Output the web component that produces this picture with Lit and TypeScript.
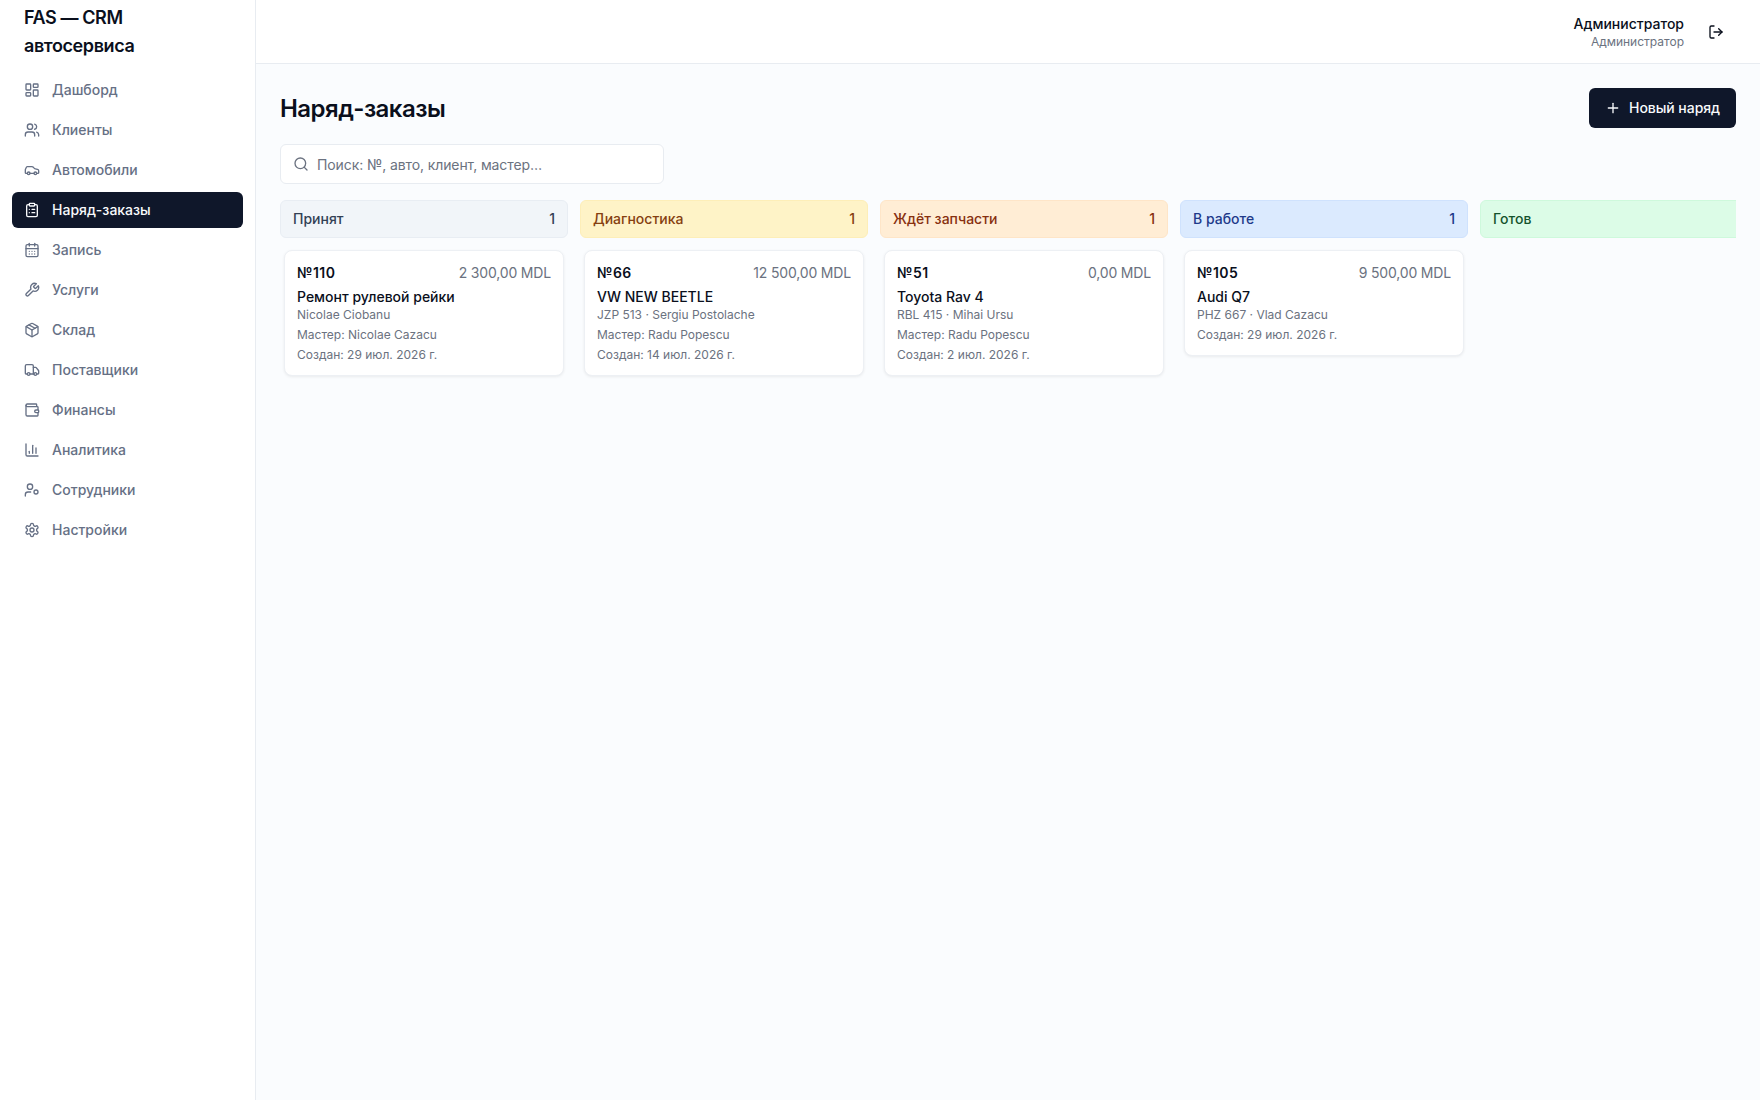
import { LitElement, css, html, svg } from "lit";
import { customElement } from "lit/decorators.js";

interface NavItem {
    label: string,
    icon: ReturnType<typeof svg>,
    active?: boolean
}

interface Order {
    no: string,
    sum: string,
    title: string,
    sub: string,
    master?: string,
    created: string
}

interface Column {
    name: string,
    tone: string,
    count?: number,
    orders: Order[]
}

const icons = {
    dashboard: svg`<rect width="7" height="9" x="3" y="3" rx="1"/><rect width="7" height="5" x="14" y="3" rx="1"/><rect width="7" height="9" x="14" y="12" rx="1"/><rect width="7" height="5" x="3" y="16" rx="1"/>`,
    users: svg`<path d="M16 21v-2a4 4 0 0 0-4-4H6a4 4 0 0 0-4 4v2"/><circle cx="9" cy="7" r="4"/><path d="M22 21v-2a4 4 0 0 0-3-3.87"/><path d="M16 3.13a4 4 0 0 1 0 7.75"/>`,
    car: svg`<path d="M19 17h2c.6 0 1-.4 1-1v-3c0-.9-.7-1.7-1.5-1.9C18.7 10.6 16 10 16 10s-1.3-1.4-2.2-2.3c-.5-.4-1.1-.7-1.8-.7H5c-.6 0-1.1.4-1.4.9l-1.4 2.9A3.7 3.7 0 0 0 2 12v4c0 .6.4 1 1 1h2"/><circle cx="7" cy="17" r="2"/><path d="M9 17h6"/><circle cx="17" cy="17" r="2"/>`,
    clipboard: svg`<rect width="8" height="4" x="8" y="2" rx="1"/><path d="M16 4h2a2 2 0 0 1 2 2v14a2 2 0 0 1-2 2H6a2 2 0 0 1-2-2V6a2 2 0 0 1 2-2h2"/><path d="M12 11h4"/><path d="M12 16h4"/><path d="M8 11h.01"/><path d="M8 16h.01"/>`,
    calendar: svg`<path d="M8 2v4"/><path d="M16 2v4"/><rect width="18" height="18" x="3" y="4" rx="2"/><path d="M3 10h18"/><path d="M8 14h.01"/><path d="M12 14h.01"/><path d="M16 14h.01"/><path d="M8 18h.01"/><path d="M12 18h.01"/><path d="M16 18h.01"/>`,
    wrench: svg`<path d="M14.7 6.3a1 1 0 0 0 0 1.4l1.6 1.6a1 1 0 0 0 1.4 0l3.77-3.77a6 6 0 0 1-7.94 7.94l-6.91 6.91a2.12 2.12 0 0 1-3-3l6.91-6.91a6 6 0 0 1 7.94-7.94l-3.76 3.76z"/>`,
    box: svg`<path d="M11 21.73a2 2 0 0 0 2 0l7-4A2 2 0 0 0 21 16V8a2 2 0 0 0-1-1.73l-7-4a2 2 0 0 0-2 0l-7 4A2 2 0 0 0 3 8v8a2 2 0 0 0 1 1.73z"/><path d="M12 22V12"/><path d="m3.3 7 8.7 5 8.7-5"/><path d="m7.5 4.27 9 5.15"/>`,
    truck: svg`<path d="M14 18V6a2 2 0 0 0-2-2H4a2 2 0 0 0-2 2v11a1 1 0 0 0 1 1h2"/><path d="M15 18H9"/><path d="M19 18h2a1 1 0 0 0 1-1v-3.65a1 1 0 0 0-.22-.624l-3.48-4.35A1 1 0 0 0 17.52 8H14"/><circle cx="17" cy="18" r="2"/><circle cx="7" cy="18" r="2"/>`,
    wallet: svg`<path d="M19 7V4a1 1 0 0 0-1-1H5a2 2 0 0 0 0 4h15a1 1 0 0 1 1 1v4h-3a2 2 0 0 0 0 4h3a1 1 0 0 0 1-1v-2a1 1 0 0 0-1-1"/><path d="M3 5v14a2 2 0 0 0 2 2h15a1 1 0 0 0 1-1v-4"/>`,
    chart: svg`<path d="M3 3v16a2 2 0 0 0 2 2h16"/><path d="M18 17V9"/><path d="M13 17V5"/><path d="M8 17v-3"/>`,
    staff: svg`<circle cx="18" cy="15" r="3"/><circle cx="9" cy="7" r="4"/><path d="M10 15H6a4 4 0 0 0-4 4v2"/>`,
    gear: svg`<path d="M12.22 2h-.44a2 2 0 0 0-2 2v.18a2 2 0 0 1-1 1.73l-.43.25a2 2 0 0 1-2 0l-.15-.08a2 2 0 0 0-2.73.73l-.22.38a2 2 0 0 0 .73 2.73l.15.1a2 2 0 0 1 1 1.72v.51a2 2 0 0 1-1 1.74l-.15.09a2 2 0 0 0-.73 2.73l.22.38a2 2 0 0 0 2.73.73l.15-.08a2 2 0 0 1 2 0l.43.25a2 2 0 0 1 1 1.73V20a2 2 0 0 0 2 2h.44a2 2 0 0 0 2-2v-.18a2 2 0 0 1 1-1.73l.43-.25a2 2 0 0 1 2 0l.15.08a2 2 0 0 0 2.73-.73l.22-.39a2 2 0 0 0-.73-2.73l-.15-.08a2 2 0 0 1-1-1.74v-.5a2 2 0 0 1 1-1.74l.15-.09a2 2 0 0 0 .73-2.73l-.22-.38a2 2 0 0 0-2.73-.73l-.15.08a2 2 0 0 1-2 0l-.43-.25a2 2 0 0 1-1-1.73V4a2 2 0 0 0-2-2z"/><circle cx="12" cy="12" r="3"/>`,
    logout: svg`<path d="m16 17 5-5-5-5"/><path d="M21 12H9"/><path d="M9 21H5a2 2 0 0 1-2-2V5a2 2 0 0 1 2-2h4"/>`,
    plus: svg`<path d="M5 12h14"/><path d="M12 5v14"/>`,
    search: svg`<path d="m21 21-4.34-4.34"/><circle cx="11" cy="11" r="8"/>`
};

const nav: NavItem[] = [
    { label: "Дашборд", icon: icons.dashboard },
    { label: "Клиенты", icon: icons.users },
    { label: "Автомобили", icon: icons.car },
    { label: "Наряд-заказы", icon: icons.clipboard, active: true },
    { label: "Запись", icon: icons.calendar },
    { label: "Услуги", icon: icons.wrench },
    { label: "Склад", icon: icons.box },
    { label: "Поставщики", icon: icons.truck },
    { label: "Финансы", icon: icons.wallet },
    { label: "Аналитика", icon: icons.chart },
    { label: "Сотрудники", icon: icons.staff },
    { label: "Настройки", icon: icons.gear }
];

const columns: Column[] = [
    {
        name: "Принят", tone: "slate", count: 1, orders: [
            { no: "№110", sum: "2 300,00 MDL", title: "Ремонт рулевой рейки", sub: "Nicolae Ciobanu", master: "Nicolae Cazacu", created: "29 июл. 2026 г." }
        ]
    },
    {
        name: "Диагностика", tone: "amber", count: 1, orders: [
            { no: "№66", sum: "12 500,00 MDL", title: "VW NEW BEETLE", sub: "JZP 513 · Sergiu Postolache", master: "Radu Popescu", created: "14 июл. 2026 г." }
        ]
    },
    {
        name: "Ждёт запчасти", tone: "orange", count: 1, orders: [
            { no: "№51", sum: "0,00 MDL", title: "Toyota Rav 4", sub: "RBL 415 · Mihai Ursu", master: "Radu Popescu", created: "2 июл. 2026 г." }
        ]
    },
    {
        name: "В работе", tone: "blue", count: 1, orders: [
            { no: "№105", sum: "9 500,00 MDL", title: "Audi Q7", sub: "PHZ 667 · Vlad Cazacu", created: "29 июл. 2026 г." }
        ]
    },
    { name: "Готов", tone: "green", orders: [] }
];

const icon = (body: ReturnType<typeof svg>) => html`
    <svg class="icon" viewBox="0 0 24 24" fill="none" stroke="currentColor" stroke-width="2" stroke-linecap="round" stroke-linejoin="round">${body}</svg>
`;

@customElement("app-root")
export class AppRoot extends LitElement {

    static styles = css`
        :host {
            display: block;
            height: 1100px;
            font-family: Inter, "Liberation Sans", sans-serif;
            color: #0a0f1c;
        }

        .layout {
            display: flex;
            height: 100%;
            background: #fafcfe;
        }

        .icon {
            width: 16px;
            height: 16px;
            flex: none;
        }

        .sidebar {
            width: 256px;
            flex: none;
            box-sizing: border-box;
            background: #fff;
            border-right: 1px solid #e8ecf1;
        }

        .brand {
            height: 64px;
            box-sizing: border-box;
            padding: 4px 24px 0;
            font-size: 18px;
            line-height: 28px;
            font-weight: 600;
            letter-spacing: -0.4px;
        }

        .nav {
            display: flex;
            flex-direction: column;
            gap: 4px;
            padding: 8px 12px;
        }

        .nav-item {
            display: flex;
            align-items: center;
            gap: 12px;
            height: 36px;
            padding: 0 12px;
            border-radius: 6px;
            font-size: 14px;
            font-weight: 500;
            color: #667085;
        }

        .nav-item span {
            margin-bottom: 1px;
        }

        .nav-item.active {
            background: #0f172a;
            color: #f8fafc;
        }

        .content {
            flex: 1;
            min-width: 0;
            display: flex;
            flex-direction: column;
        }

        .topbar {
            height: 64px;
            flex: none;
            box-sizing: border-box;
            display: flex;
            align-items: center;
            justify-content: flex-end;
            gap: 12px;
            padding: 0 24px;
            background: #fff;
            border-bottom: 1px solid #e8ecf1;
        }

        .user {
            text-align: right;
        }

        .user-name {
            font-size: 14px;
            line-height: 20px;
            font-weight: 500;
        }

        .user-role {
            font-size: 12px;
            line-height: 16px;
            color: #6b7280;
        }

        .logout {
            display: flex;
            padding: 12px;
        }

        .page {
            flex: 1;
            min-height: 0;
            padding: 24px;
        }

        .page-head {
            display: flex;
            align-items: center;
            justify-content: space-between;
            margin-bottom: 16px;
        }

        h1 {
            margin: 0;
            font-size: 24px;
            line-height: 34px;
            font-weight: 600;
            letter-spacing: -0.55px;
            padding-top: 2px;
        }

        .new-btn {
            display: flex;
            align-items: center;
            gap: 8px;
            height: 40px;
            box-sizing: border-box;
            padding: 0 16px;
            border-radius: 6px;
            background: #0f172a;
            color: #f8fafc;
            font-size: 14px;
            font-weight: 500;
            letter-spacing: -0.05px;
        }

        .new-btn span {
            margin-bottom: 1px;
        }

        .search {
            display: flex;
            align-items: center;
            gap: 8px;
            width: 384px;
            height: 40px;
            box-sizing: border-box;
            padding: 0 12px;
            margin-bottom: 16px;
            background: #fff;
            border: 1px solid #e8ecf1;
            border-radius: 6px;
            font-size: 14px;
            color: #6b7280;
            letter-spacing: -0.1px;
        }

        .board {
            display: flex;
            gap: 12px;
            overflow: hidden;
        }

        .column {
            flex: 0 0 288px;
        }

        .column-head {
            display: flex;
            justify-content: space-between;
            padding: 8px 12px;
            border: 1px solid;
            border-radius: 6px;
            font-size: 14px;
            line-height: 20px;
            font-weight: 500;
        }

        .slate { background: #f1f5f9; border-color: #e8edf3; color: #334155; }
        .amber { background: #fef3c7; border-color: #fdeeb8; color: #854010; }
        .orange { background: #ffedd5; border-color: #fee5c8; color: #873010; }
        .blue { background: #dbeafe; border-color: #cfe2fd; color: #1e3a8a; }
        .green { background: #dcfce7; border-color: #cef9dc; color: #14532d; }

        .orders {
            display: flex;
            flex-direction: column;
            gap: 8px;
            padding: 12px 4px 4px;
        }

        .card {
            padding: 12px;
            background: #fff;
            border: 1px solid #edf0f4;
            border-radius: 8px;
            box-shadow: 0 1px 3px rgba(0, 0, 0, 0.07);
        }

        .card-top {
            display: flex;
            justify-content: space-between;
            margin-bottom: 4px;
            font-size: 14px;
            line-height: 20px;
        }

        .card-no {
            font-weight: 600;
            letter-spacing: 0.5px;
        }

        .card-sum {
            color: #6b7280;
            letter-spacing: -0.17px;
        }

        .card-title {
            font-size: 14px;
            line-height: 20px;
            font-weight: 500;
        }

        .card-line {
            font-size: 12px;
            line-height: 16px;
            color: #6b7280;
        }

        .card-line + .card-line {
            margin-top: 4px;
        }
    `;

    private renderCard(order: Order) {
        return html`
            <div class="card">
                <div class="card-top">
                    <span class="card-no">${order.no}</span>
                    <span class="card-sum">${order.sum}</span>
                </div>
                <div class="card-title">${order.title}</div>
                <div class="card-line">${order.sub}</div>
                ${order.master ? html`<div class="card-line">Мастер: ${order.master}</div>` : ""}
                <div class="card-line">Создан: ${order.created}</div>
            </div>
        `;
    }

    render() {
        return html`
            <div class="layout">
                <aside class="sidebar">
                    <div class="brand">FAS — CRM автосервиса</div>
                    <nav class="nav">
                        ${nav.map(item => html`
                            <div class="nav-item ${item.active ? "active" : ""}">
                                ${icon(item.icon)}
                                <span>${item.label}</span>
                            </div>
                        `)}
                    </nav>
                </aside>
                <div class="content">
                    <header class="topbar">
                        <div class="user">
                            <div class="user-name">Администратор</div>
                            <div class="user-role">Администратор</div>
                        </div>
                        <div class="logout">${icon(icons.logout)}</div>
                    </header>
                    <main class="page">
                        <div class="page-head">
                            <h1>Наряд-заказы</h1>
                            <div class="new-btn">${icon(icons.plus)}<span>Новый наряд</span></div>
                        </div>
                        <div class="search">
                            ${icon(icons.search)}
                            <span>Поиск: №, авто, клиент, мастер…</span>
                        </div>
                        <div class="board">
                            ${columns.map(col => html`
                                <section class="column">
                                    <div class="column-head ${col.tone}">
                                        <span>${col.name}</span>
                                        <span>${col.count ?? ""}</span>
                                    </div>
                                    <div class="orders">
                                        ${col.orders.map(order => this.renderCard(order))}
                                    </div>
                                </section>
                            `)}
                        </div>
                    </main>
                </div>
            </div>
        `;
    }
}
